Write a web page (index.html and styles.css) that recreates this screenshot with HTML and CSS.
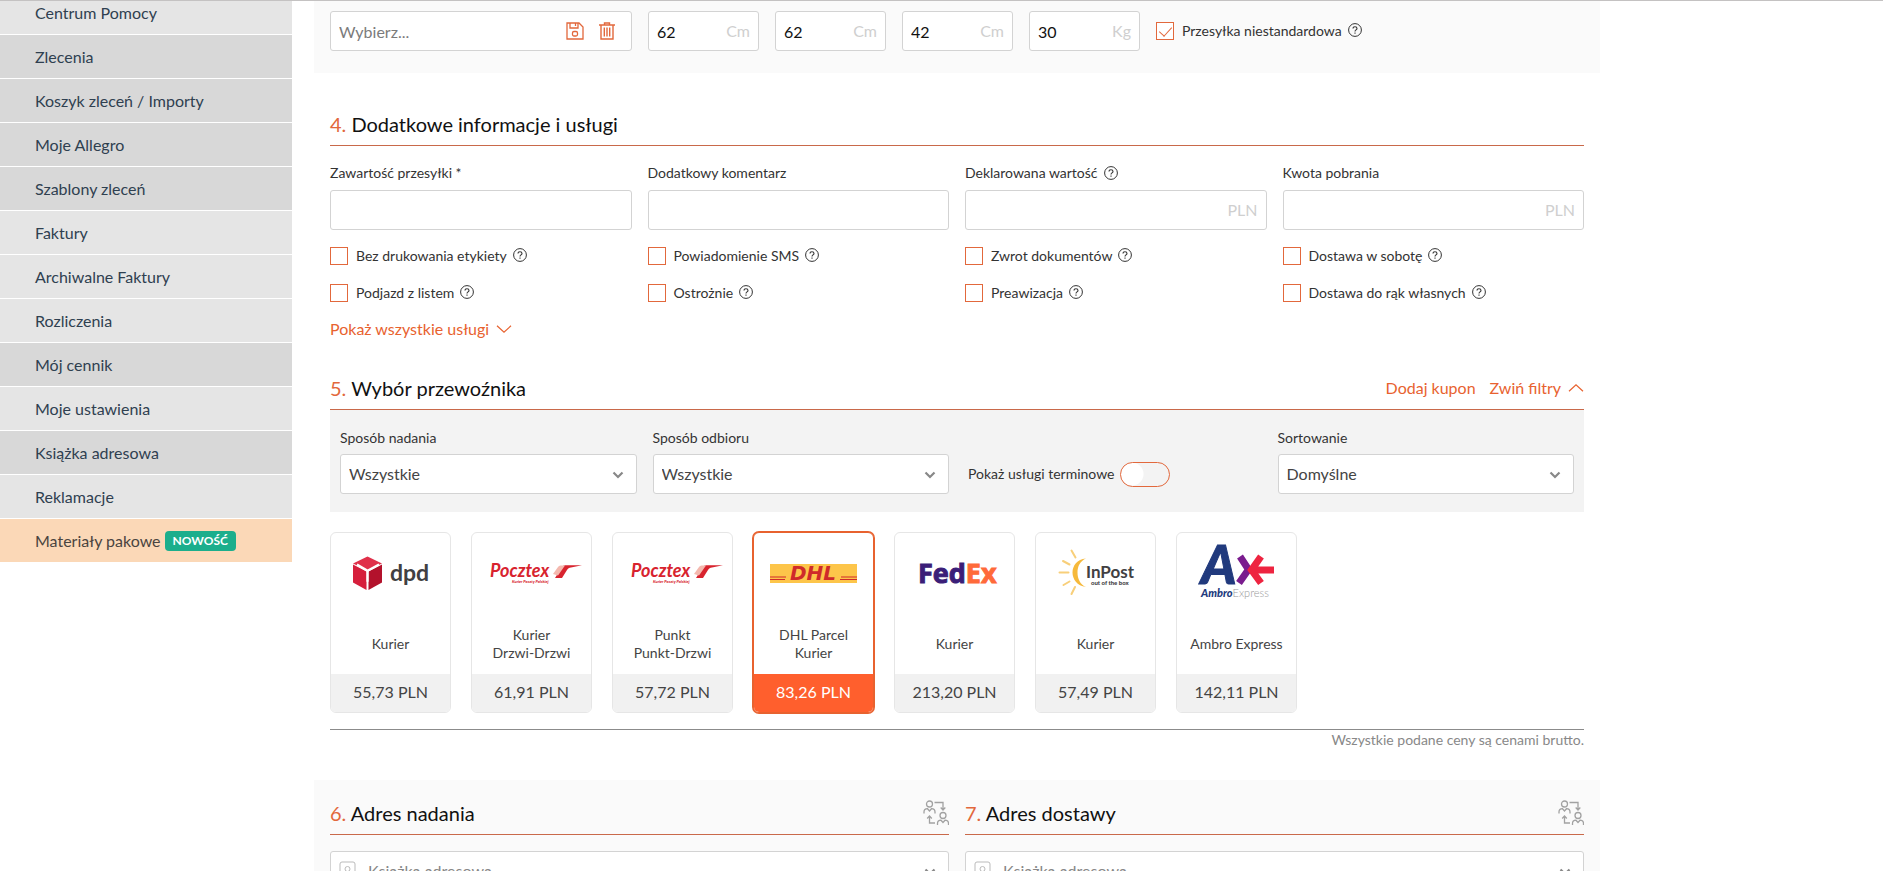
FILE: index.html
```html
<!DOCTYPE html>
<html lang="pl">
<head>
<meta charset="utf-8">
<title>Nowe zlecenie</title>
<link rel="stylesheet" href="styles.css">
</head>
<body>
<svg class="defs" aria-hidden="true">
  <symbol id="help" viewBox="0 0 14 14"><circle cx="7" cy="7" r="6.4" fill="none" stroke="currentColor" stroke-width="1"/><path d="M5 5.6C5 4.400 5.800 3.700 7 3.700s2 .7 2 1.700c0 1.400-2 1.500-2 3M7 9.600v1.100" fill="none" stroke="currentColor" stroke-width="1.100"/></symbol>
  <symbol id="chevron" viewBox="0 0 12 8"><path d="M1.500 1.500L6 6l4.500-4.500" fill="none" stroke="currentColor" stroke-width="2.200"/></symbol>
  <symbol id="caret" viewBox="0 0 16 8"><path d="M1 .8l7 6.400 7-6.400" fill="none" stroke="currentColor" stroke-width="1.200"/></symbol>
  <symbol id="swap" viewBox="0 0 26 26"><g fill="none" stroke="currentColor" stroke-width="1.300"><circle cx="6.500" cy="4" r="3"/><path d="M1 13.500v-1.500c0-2 1.500-3.300 3.500-3.300L6.500 11l2-2.300c2 0 3.500 1.300 3.500 3.300v1.500"/><circle cx="20" cy="15.500" r="3"/><path d="M14.500 25v-1.500c0-2 1.500-3.300 3.500-3.300l2 2.300 2-2.300c2 0 3.500 1.300 3.500 3.300V25"/><path d="M11.500 2.500h8.500v7M17.700 7.500L20 10l2.300-2.500M12 23H6.500v-6.500M4.200 18.500L6.500 16l2.300 2.500"/></g></symbol>
  <symbol id="pocztex" viewBox="0 0 105 60"><text x="11" y="34" class="lg-pocztex">Pocztex</text><text x="33" y="40" class="lg-pocztex-sub">Kurier Poczty Polskiej</text><path d="M76 35l7-11c1-1.600 2.500-1.800 5-1.800h15l-11 2.300c-2 .4-3 1-4 2.500L83 35z" fill="#d8232e"/><path d="M74 31l5-7c1-1.300 2-1.600 4-1.600h3l-7 10z" fill="#f4b8ae"/></symbol>
</svg>
<div class="page">
  <nav class="sidebar" aria-label="Menu">
    <a class="item first" href="#">Centrum Pomocy</a>
    <a class="item dark" href="#">Zlecenia</a>
    <a class="item dark" href="#">Koszyk zleceń / Importy</a>
    <a class="item dark" href="#">Moje Allegro</a>
    <a class="item dark" href="#">Szablony zleceń</a>
    <a class="item" href="#">Faktury</a>
    <a class="item" href="#">Archiwalne Faktury</a>
    <a class="item" href="#">Rozliczenia</a>
    <a class="item dark" href="#">Mój cennik</a>
    <a class="item" href="#">Moje ustawienia</a>
    <a class="item dark" href="#">Książka adresowa</a>
    <a class="item" href="#">Reklamacje</a>
    <a class="item promo" href="#">Materiały pakowe <span class="badge">NOWOŚĆ</span></a>
  </nav>

  <main class="main">
    <section class="panel parcel">
      <div class="field template">
        <input type="text" placeholder="Wybierz..." aria-label="Szablon paczki">
        <div class="actions">
          <button type="button" aria-label="Zapisz"><svg width="18" height="18" viewBox="0 0 18 18"><path d="M1 1h12l4 4v12H1zM4 1v5h8V1M9.500 1v3" fill="none" stroke="currentColor" stroke-width="1.300"/><rect x="6.500" y="9.500" width="5" height="4.500" rx="1.500" fill="none" stroke="currentColor" stroke-width="1.300"/></svg></button>
          <button type="button" aria-label="Usuń"><svg width="16" height="18" viewBox="0 0 16 18"><path d="M0 3h16M5.500 3V1h5v2M2 3v14h12V3M5.300 5.500v9M8 5.500v9M10.700 5.500v9" fill="none" stroke="currentColor" stroke-width="1.400"/></svg></button>
        </div>
      </div>
      <div class="sizes">
        <label class="field"><input type="text" value="62" aria-label="Długość"><span class="unit">Cm</span></label>
        <label class="field"><input type="text" value="62" aria-label="Szerokość"><span class="unit">Cm</span></label>
        <label class="field"><input type="text" value="42" aria-label="Wysokość"><span class="unit">Cm</span></label>
        <label class="field"><input type="text" value="30" aria-label="Waga"><span class="unit">Kg</span></label>
      </div>
      <label class="check"><input type="checkbox" checked>Przesyłka niestandardowa<svg class="help"><use href="#help"/></svg></label>
    </section>

    <section class="block">
      <header class="head"><h2><span>4.</span> Dodatkowe informacje i usługi</h2></header>
      <div class="grid fields">
        <div><label class="label" for="content">Zawartość przesyłki *</label><div class="field"><input id="content" type="text"></div></div>
        <div><label class="label" for="comment">Dodatkowy komentarz</label><div class="field"><input id="comment" type="text"></div></div>
        <div><label class="label" for="value">Deklarowana wartość<svg class="help"><use href="#help"/></svg></label><div class="field"><input id="value" type="text"><span class="unit">PLN</span></div></div>
        <div><label class="label" for="cod">Kwota pobrania</label><div class="field"><input id="cod" type="text"><span class="unit">PLN</span></div></div>
      </div>
      <div class="grid options">
        <label class="check"><input type="checkbox">Bez drukowania etykiety<svg class="help"><use href="#help"/></svg></label>
        <label class="check"><input type="checkbox">Powiadomienie SMS<svg class="help"><use href="#help"/></svg></label>
        <label class="check"><input type="checkbox">Zwrot dokumentów<svg class="help"><use href="#help"/></svg></label>
        <label class="check"><input type="checkbox">Dostawa w sobotę<svg class="help"><use href="#help"/></svg></label>
        <label class="check"><input type="checkbox">Podjazd z listem<svg class="help"><use href="#help"/></svg></label>
        <label class="check"><input type="checkbox">Ostrożnie<svg class="help"><use href="#help"/></svg></label>
        <label class="check"><input type="checkbox">Preawizacja<svg class="help"><use href="#help"/></svg></label>
        <label class="check"><input type="checkbox">Dostawa do rąk własnych<svg class="help"><use href="#help"/></svg></label>
      </div>
      <a class="link" href="#">Pokaż wszystkie usługi<svg class="caret"><use href="#caret"/></svg></a>
    </section>

    <section class="block carriers">
      <header class="head">
        <h2><span>5.</span> Wybór przewoźnika</h2>
        <div class="links"><a class="link" href="#">Dodaj kupon</a><a class="link" href="#">Zwiń filtry<svg class="caret up"><use href="#caret"/></svg></a></div>
      </header>
      <div class="grid filters">
        <div><label class="label" for="send">Sposób nadania</label><div class="field"><select id="send"><option>Wszystkie</option></select><svg class="chev"><use href="#chevron"/></svg></div></div>
        <div><label class="label" for="receive">Sposób odbioru</label><div class="field"><select id="receive"><option>Wszystkie</option></select><svg class="chev"><use href="#chevron"/></svg></div></div>
        <label class="toggle">Pokaż usługi terminowe<input type="checkbox" role="switch"></label>
        <div><label class="label" for="sort">Sortowanie</label><div class="field"><select id="sort"><option>Domyślne</option></select><svg class="chev"><use href="#chevron"/></svg></div></div>
      </div>

      <div class="cards">
        <button type="button" class="card">
          <svg class="logo" viewBox="0 0 105 60"><path d="M29.500 13.500L44 20.500 29.500 27.500 15 20.500z" fill="#e0304a"/><path d="M15 21.500l13.500 7V47L15 39.500z" fill="#d61f3c"/><path d="M44 21.500l-13.500 7V47L44 39.500z" fill="#b3122c"/><path d="M19 21.500l10.500 6.200v11M29.500 27.700L41 21.500" fill="none" stroke="#fff" stroke-width="2.200"/><text x="52" y="38" class="lg-dpd">dpd</text></svg>
          <span class="name">Kurier</span><span class="price">55,73 PLN</span>
        </button>
        <button type="button" class="card">
          <svg class="logo"><use href="#pocztex"/></svg>
          <span class="name">Kurier<br>Drzwi-Drzwi</span><span class="price">61,91 PLN</span>
        </button>
        <button type="button" class="card">
          <svg class="logo"><use href="#pocztex"/></svg>
          <span class="name">Punkt<br>Punkt-Drzwi</span><span class="price">57,72 PLN</span>
        </button>
        <button type="button" class="card active">
          <svg class="logo" viewBox="0 0 105 60"><rect x="9" y="21" width="87" height="19" fill="#fdc54a"/><path d="M9 34h16M9 36.500h15M80 34h16M79 36.500h17" stroke="#cf2a2a" stroke-width="1.200"/><text x="52" y="37" class="lg-dhl">DHL</text></svg>
          <span class="name">DHL Parcel<br>Kurier</span><span class="price">83,26 PLN</span>
        </button>
        <button type="button" class="card">
          <svg class="logo" viewBox="0 0 105 60"><text x="16" y="40" class="lg-fedex">Fed<tspan>Ex</tspan></text></svg>
          <span class="name">Kurier</span><span class="price">213,20 PLN</span>
        </button>
        <button type="button" class="card">
          <svg class="logo" viewBox="0 0 105 60"><path d="M43 15.500C34 16 29.500 23 29.500 29.500S34 43 43 44c-6-2.500-8.500-8.500-8.500-14.500S37 18 43 15.500z" fill="#f6b93b"/><path d="M28.500 7.500l4 7M20 18l6.500 3.500M16.500 29.500h9M20.500 42l6-3.500M28.500 51l3.500-7" stroke="#f8cf7a" stroke-width="2" stroke-linecap="round"/><text x="43" y="35" class="lg-inpost">InPost</text><text x="48" y="42" class="lg-inpost-sub">out of the box</text></svg>
          <span class="name">Kurier</span><span class="price">57,49 PLN</span>
        </button>
        <button type="button" class="card">
          <svg class="logo" viewBox="0 0 105 60"><text x="17" y="41" class="lg-ambro">A</text><path d="M56 13.500l8.500 13-9.500 13.500" fill="none" stroke="#7a1c8e" stroke-width="7"/><path d="M77 13.500L67.500 27 77 40M67 27h23" fill="none" stroke="#ee2440" stroke-width="7"/><text x="17" y="54" class="lg-ambro-sub">Ambro<tspan>Express</tspan></text></svg>
          <span class="name">Ambro Express</span><span class="price">142,11 PLN</span>
        </button>
      </div>
      <p class="note">Wszystkie podane ceny są cenami brutto.</p>
    </section>

    <section class="panel addresses">
      <div>
        <header class="head"><h2><span>6.</span> Adres nadania</h2><button type="button" class="swap" aria-label="Zamień adresy"><svg width="26" height="26"><use href="#swap"/></svg></button></header>
        <div class="field book"><svg class="lead" viewBox="0 0 17 20"><rect x="1" y="1" width="15" height="18" rx="2"/><circle cx="8.500" cy="8" r="2.500"/><path d="M4.500 15c0-5 8-5 8 0"/></svg><select aria-label="Książka adresowa nadania"><option>Książka adresowa</option></select><svg class="chev"><use href="#chevron"/></svg></div>
      </div>
      <div>
        <header class="head"><h2><span>7.</span> Adres dostawy</h2><button type="button" class="swap" aria-label="Zamień adresy"><svg width="26" height="26"><use href="#swap"/></svg></button></header>
        <div class="field book"><svg class="lead" viewBox="0 0 17 20"><rect x="1" y="1" width="15" height="18" rx="2"/><circle cx="8.500" cy="8" r="2.500"/><path d="M4.500 15c0-5 8-5 8 0"/></svg><select aria-label="Książka adresowa dostawy"><option>Książka adresowa</option></select><svg class="chev"><use href="#chevron"/></svg></div>
      </div>
    </section>
  </main>
</div>
</body>
</html>
```
FILE: styles.css
```css
* { box-sizing: border-box; }
body { margin: 0; background: #fff; color: #333; font: 14px/20px Lato, "Open Sans", sans-serif; }
button, input, select { font: inherit; color: inherit; }
button { padding: 0; border: 0; background: none; cursor: pointer; }
a { text-decoration: none; }
svg { display: block; flex: none; }
.defs { position: absolute; width: 0; height: 0; }

.page { display: flex; align-items: flex-start; gap: 22px; height: 100vh; overflow: hidden; border-top: 1px solid #c4c2c2; }

.sidebar { flex: 0 0 292px; }
.item { display: flex; align-items: center; gap: 4px; padding: 12px 16px 11px 35px; border-bottom: 1px solid #fff; background: #e5e5e5; color: #2f4050; font-size: 16px; }
.item.first { padding-top: 2px; }
.item.dark { background: #d8d8d8; }
.item.promo { background: #fbd8b7; color: #4a4440; }
.badge { padding: 0 8px; border-radius: 4px; background: #1cae8c; color: #fff; font-size: 12px; font-weight: 700; }

.main { flex: 0 1 1286px; min-width: 0; }
.panel { padding: 10px 16px 22px; background: #fafafa; }
.block { padding: 39px 16px 0; }
.grid { display: grid; grid-template-columns: repeat(4, minmax(0, 1fr)); column-gap: 16px; }

.parcel { display: flex; align-items: center; gap: 16px; }
.template { flex: 0 1 302px; }
.sizes { display: flex; gap: 16px; flex: 0 1 492px; }
.sizes .field { flex: 1; }

.field { position: relative; display: flex; align-items: center; height: 40px; min-width: 0; border: 1px solid #d3d3d3; border-radius: 3px; background: #fff; font-size: 16px; color: #111; }
.field input, .field select { flex: 1; min-width: 0; width: 100%; height: 100%; padding: 0 8px; border: 0; outline: 0; background: none; appearance: none; }
.field input::placeholder { color: #7b7b7b; opacity: 1; }
.field select { color: #444; }
.unit { padding-right: 8px; color: #cfcfcf; }
.actions { display: flex; gap: 15px; padding-right: 16px; color: #e2683c; }
.chev { position: absolute; right: 12px; top: 16px; width: 12px; height: 8px; color: #888; pointer-events: none; }

.check { display: flex; align-items: center; color: #333; }
.check input { display: grid; justify-content: center; appearance: none; flex: none; width: 18px; height: 18px; margin: 0 8px 0 0; border: 1px solid #e2683c; background: #fff; }
.check input:checked::before { content: ""; width: 6px; height: 11px; margin-top: 1px; border: solid #e2683c; border-width: 0 1px 1px 0; transform: rotate(42deg); }
.help { width: 14px; height: 14px; margin-left: 6px; color: #333; }
.check .help { margin-bottom: 3px; }

.head { display: flex; align-items: center; justify-content: space-between; height: 34px; padding-bottom: 10px; border-bottom: 1px solid #c9694a; }
h2 { margin: 0; font-size: 20px; line-height: 24px; font-weight: 400; color: #111; }
h2 span { color: #e2683c; }
.label { display: flex; align-items: center; margin-bottom: 7px; color: #333; }
.fields { padding-top: 17px; }
.options { row-gap: 17px; padding: 16px 0; }
.link { display: inline-flex; align-items: center; gap: 7px; color: #e8622f; font-size: 16px; }
.links { display: flex; gap: 14px; }
.caret { width: 16px; height: 8px; }
.caret.up { transform: rotate(180deg); }

.carriers { padding-top: 36px; }
.filters { align-items: end; padding: 18px 10px; background: #f3f3f3; }
.filters .label { margin-bottom: 6px; }
.toggle { display: flex; align-items: center; gap: 6px; height: 40px; padding-left: 3px; }
.toggle input { appearance: none; width: 50px; height: 25px; margin: 0; border: 1px solid #e2683c; border-radius: 13px; background: radial-gradient(circle at 11px 11px, #fff 11px, transparent 12px); }

.cards { display: flex; flex-wrap: wrap; gap: 20px; padding: 20px 0 16px; border-bottom: 1px solid #8b8b8b; }
.card { display: flex; flex-direction: column; align-items: center; width: 121px; border: 1px solid #e6e6e6; border-radius: 6px; background: #fff; }
.card.active { border-color: #e8622f; box-shadow: 0 0 0 1px #e8622f; }
.logo { width: 105px; height: 60px; margin-top: 10px; }
.name { display: flex; align-items: center; justify-content: center; height: 36px; margin: 23px 0 12px; line-height: 18px; color: #444; }
.price { width: 100%; height: 38px; border-radius: 0 0 5px 5px; background: #f1f1f1; color: #444; font-size: 16px; line-height: 36px; }
.active .price { background: #ff5f2d; color: #fff; }
.note { margin: 0 0 30px; text-align: right; color: #888; }

.addresses { display: grid; grid-template-columns: repeat(2, minmax(0, 1fr)); gap: 16px; padding-top: 21px; }
.addresses .field { margin-top: 16px; }
.swap { color: #a2a2a2; }
.lead { width: 17px; height: 20px; margin-left: 8px; fill: none; stroke: #bbb; stroke-width: 1px; }
.book select { padding-left: 12px; color: #888; }

.lg-dpd { font: 700 23px Lato, sans-serif; fill: #414042; }
.lg-pocztex { font: italic 700 18px Lato, sans-serif; fill: #d8232e; }
.lg-pocztex-sub { font: italic 900 4px Lato, sans-serif; fill: #d8232e; }
.lg-dhl { font: italic 700 20px "DejaVu Sans", sans-serif; fill: #cf2a2a; text-anchor: middle; }
.lg-fedex { font: 700 27px "Open Sans", sans-serif; fill: #3b1e78; stroke: #3b1e78; stroke-width: 1px; }
.lg-fedex tspan { fill: #ff6a3a; stroke: #ff6a3a; }
.lg-inpost { font: 700 17px Lato, sans-serif; fill: #414042; }
.lg-inpost-sub { font: 900 6px Lato, sans-serif; fill: #414042; }
.lg-ambro { font: italic 900 54px Lato, sans-serif; fill: #213a7d; stroke: #213a7d; stroke-width: 1px; }
.lg-ambro-sub { font: italic 900 11px Lato, sans-serif; fill: #213a7d; }
.lg-ambro-sub tspan { font-style: normal; font-weight: 300; fill: #999; }
```
